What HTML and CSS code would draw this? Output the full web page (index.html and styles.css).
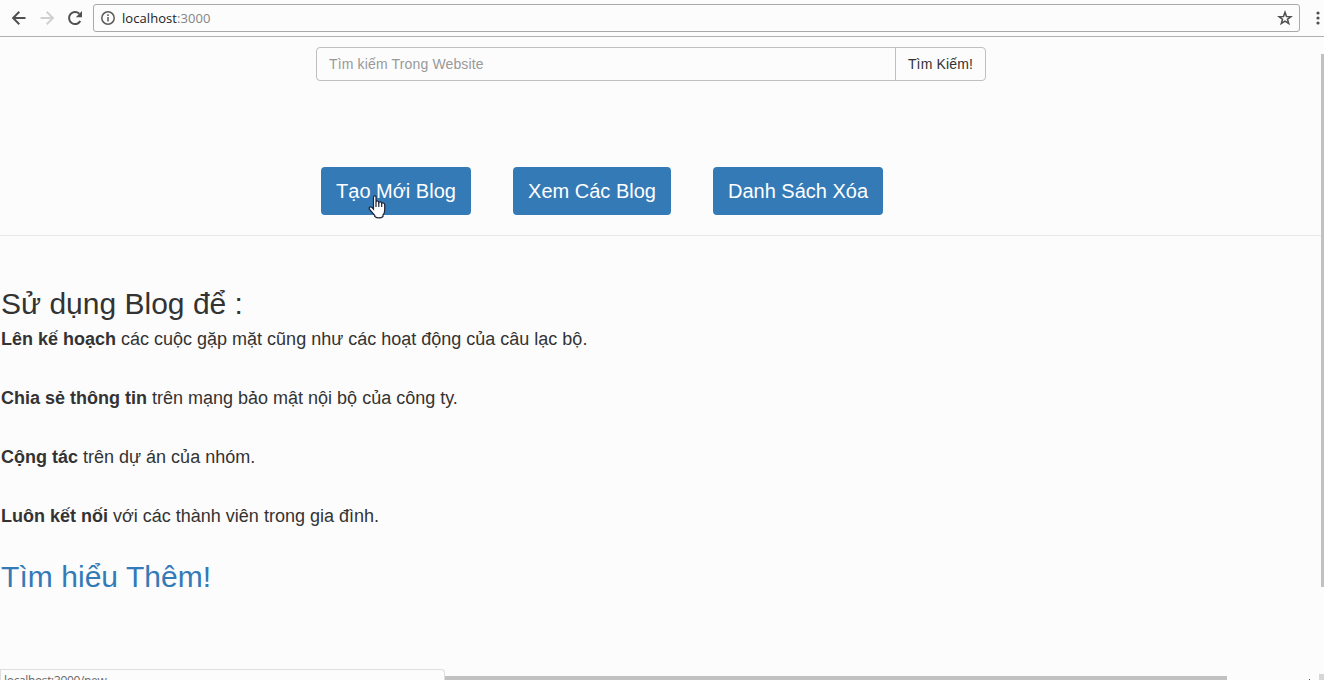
FILE: index.html
```html
<!DOCTYPE html>
<html lang="vi">
<head>
<meta charset="utf-8">
<title>Blog</title>
<link rel="stylesheet" href="styles.css">
</head>
<body>
<header class="toolbar">
  <svg class="nav-icon" viewBox="0 0 16 16"><path d="M14.500 8H2.500M8.300 1.800L2.100 8L8.300 14.200"/></svg>
  <svg class="nav-icon disabled" viewBox="0 0 16 16"><path d="M1.500 8H13.500M7.700 1.800L13.900 8L7.700 14.200"/></svg>
  <svg class="nav-icon" viewBox="0 0 16 16"><path d="M13.300 11A6 6 0 1 1 12.300 3.800"/><path class="solid" d="M15 1V7.200H8.800Z"/></svg>
  <div class="address">
    <svg class="info" viewBox="0 0 14 14"><circle cx="7" cy="7" r="6.200"/><path d="M7 6V10.500M7 3.300V5"/></svg>
    <span class="url">localhost<span class="port">:3000</span></span>
    <svg class="star" viewBox="0 0 16 16"><path d="M8 2.200L9.500 6.400L13.900 6.600L10.500 9.300L11.700 13.500L8 11.100L4.300 13.500L5.500 9.300L2.100 6.600L6.500 6.400Z"/></svg>
  </div>
  <svg class="more" viewBox="0 0 4 14"><circle cx="2" cy="2" r="1.600"/><circle cx="2" cy="7" r="1.600"/><circle cx="2" cy="12" r="1.600"/></svg>
</header>
<main class="page">
  <form class="search">
    <input class="search-input" type="text" placeholder="Tìm kiếm Trong Website">
    <button class="search-button" type="button">Tìm Kiếm!</button>
  </form>
  <nav class="actions">
    <a class="btn create">Tạo Mới Blog</a>
    <a class="btn view">Xem Các Blog</a>
    <a class="btn trash">Danh Sách Xóa</a>
  </nav>
  <section class="intro">
    <h2 class="title">Sử dụng Blog để :</h2>
    <p class="line"><b>Lên kế hoạch</b> các cuộc gặp mặt cũng như các hoạt động của câu lạc bộ.</p>
    <p class="line"><b>Chia sẻ thông tin</b> trên mạng bảo mật nội bộ của công ty.</p>
    <p class="line"><b>Cộng tác</b> trên dự án của nhóm.</p>
    <p class="line"><b>Luôn kết nối</b> với các thành viên trong gia đình.</p>
    <h2 class="more-link">Tìm hiểu Thêm!</h2>
  </section>
</main>
<div class="scroll-y"></div>
<div class="scroll-x"></div>
<div class="scroll-arrow"></div>
<div class="scroll-corner"></div>
<div class="status">localhost:3000/new</div>
<svg class="cursor" viewBox="0 0 18 24"><path d="M5.500 13V2.300Q5.500 .8 6.800 .8T8 2.300V7Q8.300 5.800 9.500 6T10.800 7.500Q11.300 6.500 12.500 6.900T13.700 8.300Q14.300 7.500 15.400 8T16.700 9.700V15Q16.700 18 15 20V21.500Q13.500 22.900 11 22.900T6.800 21.500V20.500L1.600 14.500Q.6 12.800 1.900 12T5.500 14Z"/><path d="M8 7V12M10.800 7.500V12M13.700 8.500V12"/></svg>
</body>
</html>
```
FILE: styles.css
```css
* { box-sizing: border-box; }
body {
  margin: 0;
  height: 680px;
  overflow: hidden;
  background: #fcfcfc;
  color: #333;
  font-family: "Liberation Sans", Arial, sans-serif;
}
.toolbar {
  display: flex;
  align-items: center;
  height: 37px;
  padding-left: 11px;
  border-bottom: 1px solid #b0b0b0;
}
.nav-icon {
  flex: none;
  width: 16px;
  height: 16px;
  margin-right: 12px;
  fill: none;
  stroke: #505050;
  stroke-width: 2;
}
.nav-icon.disabled { stroke: #d0d0d0; }
.nav-icon .solid { fill: #505050; stroke: none; }
.address {
  display: flex;
  align-items: center;
  width: 1207px;
  height: 28px;
  margin-left: -2px;
  padding: 0 7px;
  border: 1px solid #a9a9a9;
  border-radius: 3px;
}
.info { width: 14px; height: 14px; margin-right: 7px; fill: none; stroke: #5a5a5a; stroke-width: 1.5; }
.url { flex: 1; font: 13px "Open Sans", sans-serif; letter-spacing: .06px; color: #222; }
.port { color: #858585; }
.star { width: 16px; height: 16px; margin-right: -1px; fill: none; stroke: #505050; stroke-width: 1.5; }
.more { flex: none; width: 4px; height: 14px; margin-left: 16px; fill: #505050; }
.page { padding-top: 10px; }
.search { display: flex; width: 670px; height: 34px; margin-left: 316px; }
.search-input, .search-button {
  border: 1px solid #bfbfbf;
  background: #fcfcfc;
  font: 14px "Liberation Sans", Arial, sans-serif;
  letter-spacing: .15px;
  color: #333;
}
.search-input { width: 580px; padding: 0 12px; border-radius: 4px 0 0 4px; }
.search-input::placeholder { color: #999; opacity: 1; }
.search-button { width: 91px; margin-left: -1px; padding: 0; border-radius: 0 4px 4px 0; }
.actions {
  display: flex;
  gap: 42px;
  height: 155px;
  padding: 86px 0 0 321px;
  border-bottom: 1px solid #e8e8e8;
}
.btn {
  height: 48px;
  border-radius: 4px;
  background: #337ab7;
  color: #fff;
  font-size: 20px;
  line-height: 48px;
  text-align: center;
  white-space: nowrap;
}
.create { width: 150px; }
.view { width: 158px; }
.trash { width: 170px; }
.intro { padding: 51px 0 0 1px; }
.title, .more-link { margin: 0; font-size: 30px; font-weight: 400; line-height: 33px; }
.line { height: 25px; margin: 0 0 34px; font-size: 18px; line-height: 25px; white-space: nowrap; }
.title + .line { margin-top: 7px; }
.more-link { margin-top: -3px; letter-spacing: .05px; color: #337ab7; }
.scroll-y { position: absolute; left: 1321px; top: 54px; width: 3px; height: 533px; background: #c1c1c1; }
.scroll-x { position: absolute; left: 444px; top: 676px; width: 783px; height: 4px; background: #c1c1c1; }
.scroll-arrow { position: absolute; left: 1309px; top: 679px; width: 1px; height: 1px; background: #505050; }
.scroll-corner { position: absolute; left: 1319px; top: 674px; width: 5px; height: 6px; background: #d6d6d6; }
.status {
  position: absolute;
  left: 0;
  top: 669px;
  width: 445px;
  height: 11px;
  overflow: hidden;
  padding: 3px 0 0 3px;
  border: 1px solid #dedede;
  border-bottom: 0;
  border-radius: 0 4px 0 0;
  background: #fcfcfc;
  color: #666;
  font: 12px/16px "Open Sans", sans-serif;
  letter-spacing: -.35px;
}
.cursor { position: absolute; left: 368px; top: 195px; width: 18px; height: 24px; fill: #fff; stroke: #1c2233; stroke-width: 1.2; }
```
